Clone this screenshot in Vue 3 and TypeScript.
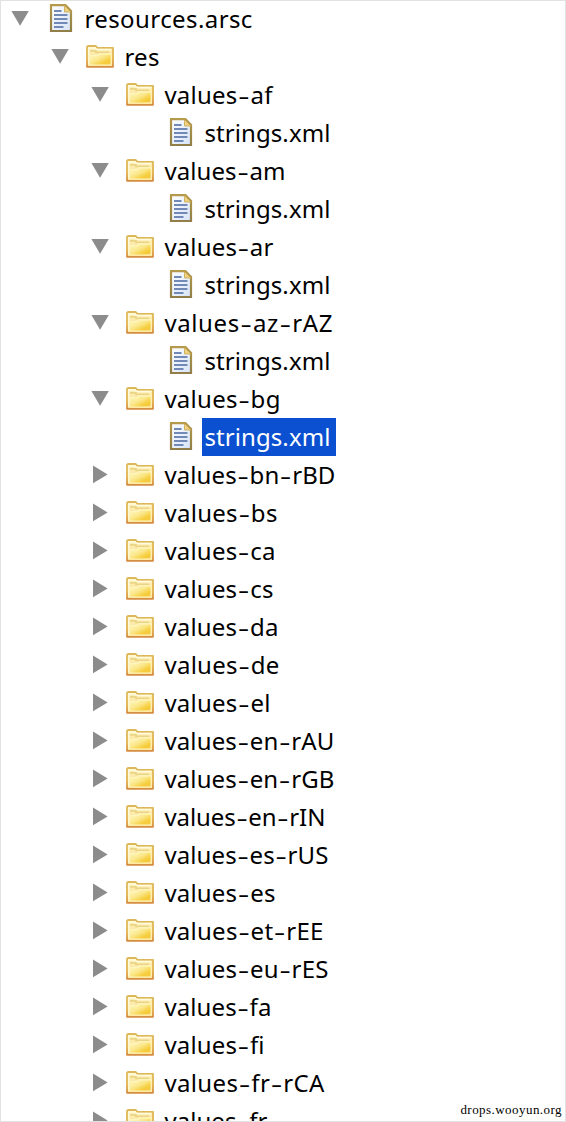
<script setup lang="ts">
type Kind = 'file' | 'folder'

interface Row {
  name: string
  depth: number
  kind: Kind
  open?: boolean
  selected?: boolean
  width: number
}

const expanded: [string, number][] = [
  ['values-af', 108],
  ['values-am', 121],
  ['values-ar', 109],
  ['values-az-rAZ', 168],
  ['values-bg', 116],
]

const collapsed: [string, number][] = [
  ['values-bn-rBD', 171],
  ['values-bs', 113],
  ['values-ca', 111],
  ['values-cs', 109],
  ['values-da', 114],
  ['values-de', 115],
  ['values-el', 106],
  ['values-en-rAU', 170],
  ['values-en-rGB', 170],
  ['values-en-rIN', 161],
  ['values-es-rUS', 164],
  ['values-es', 111],
  ['values-et-rEE', 159],
  ['values-eu-rES', 164],
  ['values-fa', 107],
  ['values-fi', 100],
  ['values-fr-rCA', 160],
  ['values-fr', 103],
]

const rows: Row[] = [
  { name: 'resources.arsc', depth: 0, kind: 'file', open: true, width: 168 },
  { name: 'res', depth: 1, kind: 'folder', open: true, width: 35 },
  ...expanded.flatMap(([name, width]): Row[] => [
    { name, depth: 2, kind: 'folder', open: true, width },
    { name: 'strings.xml', depth: 3, kind: 'file', selected: name === 'values-bg', width: 126 },
  ]),
  ...collapsed.map(([name, width]): Row => ({ name, depth: 2, kind: 'folder', open: false, width })),
]

// Hyphens use a wider, thinner face and sit slightly lower than its default.
const HYPHEN_DROP = 3

function parts(name: string) {
  const pieces = name.split(/(-)/)
  return pieces.map((text, i) => {
    const hyphen = text === '-'
    return { text, hyphen, dy: hyphen ? HYPHEN_DROP : i > 0 ? -HYPHEN_DROP : 0 }
  })
}
</script>

<template>
  <main class="panel">
    <div class="tree">
      <div v-for="(row, i) in rows" :key="i" class="row" :class="'depth-' + row.depth">
        <svg class="arrow" width="20" height="38" viewBox="0 0 20 38">
          <path v-if="row.open === true" d="M1.4 11.1H18.8L10.1 25.8Z" />
          <path v-else-if="row.open === false" d="M3 9.6V27.2L17.6 18.4Z" />
        </svg>
        <svg v-if="row.kind === 'folder'" class="icon" width="30" height="38" viewBox="0 0 30 38">
          <path d="M2 28.8V9L3 8H10.8L12.4 9.8H28V28.8Z" fill="url(#folder-fill)" stroke="url(#folder-edge)" stroke-width="1.8" stroke-linejoin="round" />
          <path d="M3.7 27V10H10L11.6 11.6H26.3" fill="none" stroke="#fffbe0" stroke-width="1.5" />
          <path d="M5 12.8H11V14.4H24" fill="none" stroke="#ecd486" stroke-width="1.8" />
          <path d="M4.2 27V17.6H12.5L14 15.8H26.2V27Z" fill="url(#folder-front)" stroke="#fff6c0" stroke-width="1.2" />
        </svg>
        <svg v-else class="icon" width="30" height="38" viewBox="0 0 30 38">
          <path d="M6 5.2H20.5L26 11V31H6Z" fill="url(#page-fill)" stroke="url(#page-edge)" stroke-width="2.2" />
          <path d="M19.5 5.5V12H26Z" fill="#ecd280" stroke="#c9a650" stroke-width="0.8" />
          <path d="M9 11H16.5M9 15H22.5M9 19H22.5M9 23H22.5M9 27H18.5" fill="none" stroke="#7289b8" stroke-width="1.9" />
        </svg>
        <span class="label" :class="{ selected: row.selected }">
          <svg class="text" :width="row.width + 8" height="38">
            <text x="2.4" y="27.5" :textLength="row.width" lengthAdjust="spacing"><tspan v-for="(part, p) in parts(row.name)" :key="p" :dy="part.dy" :class="{ hyphen: part.hyphen }">{{ part.text }}</tspan></text>
          </svg>
        </span>
      </div>
    </div>
    <span class="credit">drops.wooyun.org</span>
    <svg class="defs" width="0" height="0">
      <defs>
        <linearGradient id="folder-edge" x1="0" y1="0" x2="0" y2="1">
          <stop offset="0" stop-color="#dcb85a" />
          <stop offset="0.6" stop-color="#e3b04c" />
          <stop offset="1" stop-color="#d58c42" />
        </linearGradient>
        <linearGradient id="folder-fill" x1="0" y1="0" x2="0" y2="1">
          <stop offset="0" stop-color="#fff3c0" />
          <stop offset="1" stop-color="#f8dc80" />
        </linearGradient>
        <linearGradient id="folder-front" x1="0" y1="0" x2="1" y2="1">
          <stop offset="0" stop-color="#fff8c8" />
          <stop offset="0.45" stop-color="#fbe88c" />
          <stop offset="0.75" stop-color="#f6cc38" />
          <stop offset="1" stop-color="#f4c850" />
        </linearGradient>
        <linearGradient id="page-fill" x1="0" y1="0" x2="1" y2="1">
          <stop offset="0" stop-color="#ffffff" />
          <stop offset="1" stop-color="#d5e3f8" />
        </linearGradient>
        <linearGradient id="page-edge" x1="0" y1="0" x2="0" y2="1">
          <stop offset="0" stop-color="#b59a4c" />
          <stop offset="1" stop-color="#917e48" />
        </linearGradient>
      </defs>
    </svg>
  </main>
</template>

<style>
body {
  margin: 0;
  background: #fff;
}
</style>

<style scoped>
.panel {
  position: relative;
  box-sizing: border-box;
  width: 566px;
  height: 1122px;
  overflow: hidden;
  background: #fff;
}
.panel::after {
  content: '';
  position: absolute;
  inset: 0;
  border: 1px solid #e2e2e2;
}
.row {
  display: flex;
  height: 38px;
  padding-left: 10px;
}
.depth-1 { padding-left: 50px; }
.depth-2 { padding-left: 90px; }
.depth-3 { padding-left: 130px; }
.arrow {
  flex: none;
  fill: #8c8c8c;
}
.icon {
  flex: none;
  margin-left: 15px;
}
.label {
  height: 38px;
  margin-left: 7px;
}
.selected {
  background: #0a50d0;
}
.text {
  display: block;
  overflow: visible;
  font-family: 'Noto Sans', 'Open Sans', sans-serif;
  font-size: 24px;
  fill: #000;
}
.hyphen {
  font-family: Inter, sans-serif;
  font-size: 28px;
  font-weight: 300;
}
.selected .text {
  fill: #fff;
}
.credit {
  position: absolute;
  right: 4px;
  bottom: 5px;
  font: 13px/14px 'Liberation Serif', serif;
  letter-spacing: 0.45px;
  color: #000;
}
.defs {
  position: absolute;
}
</style>
